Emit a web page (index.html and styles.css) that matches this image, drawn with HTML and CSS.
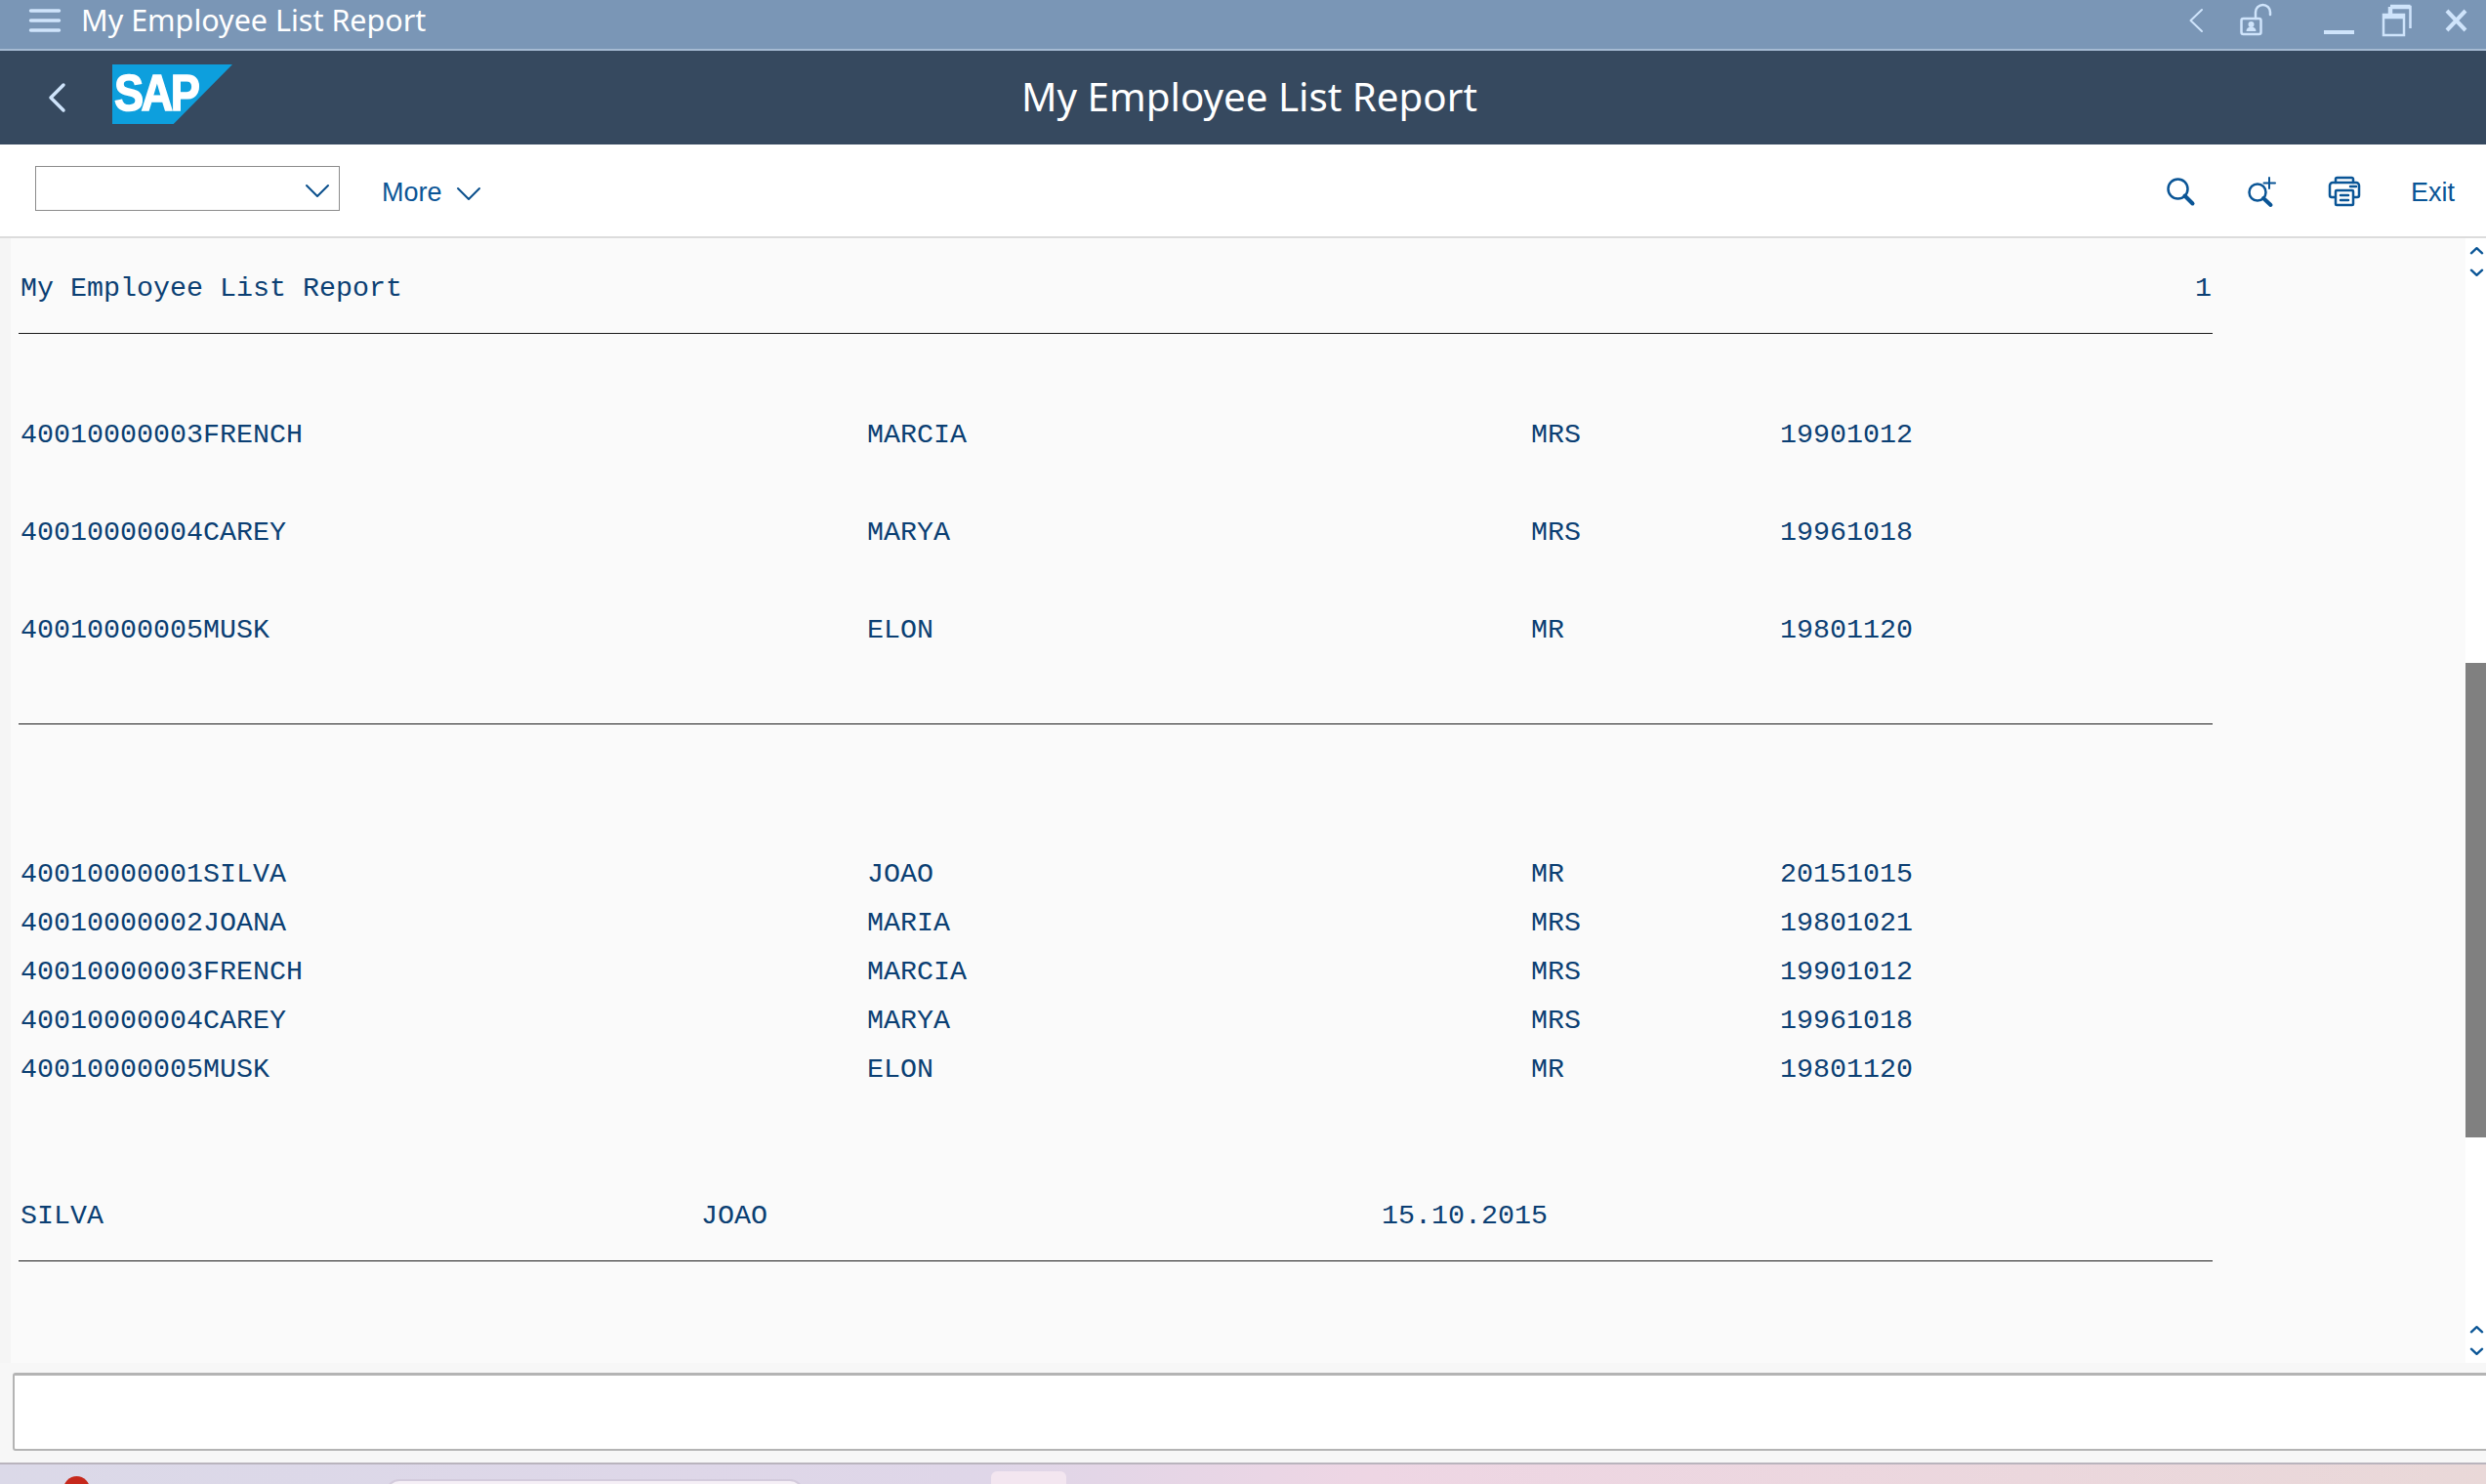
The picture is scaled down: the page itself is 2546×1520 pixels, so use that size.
FILE: index.html
```html
<!DOCTYPE html>
<html lang="en">
<head>
<meta charset="utf-8">
<title>My Employee List Report</title>
<link rel="stylesheet" href="styles.css">
</head>
<body>
<div class="app">
  <header class="titlebar">
    <svg class="ic-menu" viewBox="0 0 32 24"><path d="M1.500 2H30.500M1.500 12H30.500M1.500 22H30.500"/></svg>
    <span class="titlebar-text">My Employee List Report</span>
    <div class="window-controls">
      <svg class="ic-prev" viewBox="0 0 14 24"><path d="M13 1 1.500 12 13 23"/></svg>
      <svg class="ic-lock" viewBox="0 0 32 32"><rect x="1.500" y="15" width="20" height="16" rx="2"/><path d="M16 15V8.500a7.500 7.500 0 0 1 15 0V11"/><circle class="solid" cx="11.500" cy="21" r="3"/><path class="solid" d="M6.500 28c0-3 2-4.500 5-4.500s5 1.500 5 4.500z"/></svg>
      <svg class="ic-min" viewBox="0 0 31 4"><path d="M0 2H31"/></svg>
      <svg class="ic-restore" viewBox="0 0 30 32"><path d="M8 2H28.500V24"/><path d="M8 2V9M28.500 2H8" class="thick"/><rect x="1" y="10" width="21" height="21"/><path d="M1 12H22" class="thick"/></svg>
      <svg class="ic-close" viewBox="0 0 23 22"><path d="M2 1 21 21M21 1 2 21"/></svg>
    </div>
  </header>
  <div class="appbar">
    <svg class="ic-back" viewBox="0 0 18 30"><path d="M16 2 3 15 16 28"/></svg>
    <div class="logo"><span class="logo-text">SAP</span></div>
    <h1 class="appbar-title">My Employee List Report</h1>
  </div>
  <div class="toolbar">
    <div class="select"><svg class="ic-chev" viewBox="0 0 24 13"><path d="M1 1 12 12 23 1"/></svg></div>
    <div class="more">More<svg class="ic-chev" viewBox="0 0 24 13"><path d="M1 1 12 12 23 1"/></svg></div>
    <div class="actions">
      <svg class="ic-search" viewBox="0 0 28 28"><circle cx="11.500" cy="11.500" r="10"/><path class="heavy" d="M18.500 18.500 26.500 26.500"/></svg>
      <svg class="ic-zoom" viewBox="0 0 30 29"><circle cx="11" cy="15" r="8.500"/><path class="heavy" d="M17 21 24.500 28"/><path class="thin" d="M23 0V11M17.500 5.500H29"/></svg>
      <svg class="ic-print" viewBox="0 0 32 30"><path d="M7 6V2.500a1.500 1.500 0 0 1 1.500-1.500H23.500a1.500 1.500 0 0 1 1.500 1.500V6"/><path d="M6 21H3a2 2 0 0 1-2-2V9a3 3 0 0 1 3-3H28a3 3 0 0 1 3 3V19a2 2 0 0 1-2 2H26"/><rect x="7" y="14" width="18" height="15" rx="1"/><path d="M12 19H20M12 24H20M22 10H28"/></svg>
      <span class="exit">Exit</span>
    </div>
  </div>
  <main class="workarea">
    <div class="report">
      <div class="page">
<div class="row">My Employee List Report                                                                                                            1</div>
<div class="row rule"></div>
<div class="row"></div>
<div class="row">40010000003FRENCH                                  MARCIA                                  MRS            19901012</div>
<div class="row"></div>
<div class="row">40010000004CAREY                                   MARYA                                   MRS            19961018</div>
<div class="row"></div>
<div class="row">40010000005MUSK                                    ELON                                    MR             19801120</div>
<div class="row"></div>
<div class="row rule"></div>
<div class="row"></div>
<div class="row"></div>
<div class="row">40010000001SILVA                                   JOAO                                    MR             20151015</div>
<div class="row">40010000002JOANA                                   MARIA                                   MRS            19801021</div>
<div class="row">40010000003FRENCH                                  MARCIA                                  MRS            19901012</div>
<div class="row">40010000004CAREY                                   MARYA                                   MRS            19961018</div>
<div class="row">40010000005MUSK                                    ELON                                    MR             19801120</div>
<div class="row"></div>
<div class="row"></div>
<div class="row">SILVA                                    JOAO                                     15.10.2015</div>
<div class="row rule"></div>
      </div>
    </div>
    <aside class="scrollrail">
      <div class="pager"><svg viewBox="0 0 14 7"><path d="M1 6.500 7 1l6 5.500"/></svg><svg viewBox="0 0 14 7"><path d="M1 .5 7 6l6-5.500"/></svg></div>
      <div class="thumb"></div>
      <div class="pager pager-end"><svg viewBox="0 0 14 7"><path d="M1 6.500 7 1l6 5.500"/></svg><svg viewBox="0 0 14 7"><path d="M1 .5 7 6l6-5.500"/></svg></div>
    </aside>
  </main>
  <div class="okcode"><div class="okcode-field"></div></div>
  <footer class="taskbar">
    <span class="dot"></span>
    <span class="pill"></span>
    <span class="tile"></span>
  </footer>
</div>
</body>
</html>
```
FILE: styles.css
```css
* { box-sizing: border-box; }
html, body { margin: 0; height: 100%; overflow: hidden; }
body { font-family: "Noto Sans", sans-serif; background: #f7f7f7; }
svg { display: block; fill: none; stroke-linecap: round; stroke-linejoin: round; overflow: visible; }

.app { width: 2546px; height: 1520px; display: flex; flex-direction: column; overflow: hidden; }

.titlebar { height: 52px; flex: none; display: flex; align-items: center; background: #7a96b6; border-bottom: 2px solid #a5bad2; padding: 0 0 8px 30px; color: #fff; }
.titlebar svg { stroke: #cfe4fb; }
.ic-menu { width: 32px; height: 24px; stroke-width: 3.500; }
.titlebar-text { font-size: 30.500px; margin: -3px 0 0 21px; line-height: 40px; }
.window-controls { margin: 0 0 -8px auto; display: flex; align-items: flex-start; height: 50px; }
.ic-prev { width: 14px; height: 24px; margin: 9px 0 0 0; stroke-width: 2; }
.ic-lock { width: 32px; height: 32px; margin: 4px 0 0 38px; stroke-width: 2.500; }
.ic-lock .solid { fill: #cfe4fb; stroke: none; }
.ic-min { width: 31px; height: 4px; margin: 31px 0 0 54px; stroke-width: 4; stroke-linecap: butt; }
.ic-restore { width: 30px; height: 32px; margin: 5px 0 0 29px; stroke-width: 2.500; stroke-linecap: butt; stroke-linejoin: miter; }
.ic-restore .thick { stroke-width: 4.500; }
.ic-close { width: 23px; height: 22px; margin: 10px 19px 0 34px; stroke-width: 4; stroke-linecap: butt; }

.appbar { height: 96px; flex: none; display: flex; align-items: center; background: #36495f; padding-left: 49px; position: relative; }
.ic-back { width: 18px; height: 30px; stroke: #cfe4fb; stroke-width: 3.500; }
.logo { width: 123px; height: 61px; margin: -7px 0 0 48px; background: #0d9fdd; clip-path: polygon(0 0, 100% 0, 51% 100%, 0 100%); display: flex; align-items: center; }
.logo-text { font-family: "Liberation Sans", sans-serif; font-weight: 700; font-size: 52px; line-height: 1; letter-spacing: -3px; color: #fff; -webkit-text-stroke: 1.500px #fff; margin: -3px 0 0 2px; transform: scaleX(0.87); transform-origin: left center; }
.appbar-title { position: absolute; left: 13px; right: 0; top: 1px; margin: 0; text-align: center; font-weight: 400; font-size: 40.300px; line-height: 92px; color: #fff; }

.toolbar { height: 96px; flex: none; display: flex; align-items: center; background: #fff; border-bottom: 2px solid #dcdcdc; padding: 2px 32px 0 36px; color: #0a5596; font-family: "Liberation Sans", sans-serif; font-size: 27px; }
.toolbar .ic-chev { width: 24px; height: 13px; stroke: #0a4f8c; stroke-width: 2; }
.select { width: 312px; height: 46px; margin-top: -6px; border: 1px solid #8c8c8c; display: flex; align-items: center; justify-content: flex-end; padding: 5px 10px 0 0; }
.more { margin: 2px 0 0 43px; display: flex; align-items: center; gap: 15px; }
.more .ic-chev { margin-top: 3px; }
.actions { margin-left: auto; display: flex; align-items: center; }
.actions svg { stroke: #0a5596; stroke-width: 2.500; }
.actions .heavy { stroke-width: 4; }
.actions .thin { stroke-width: 2; }
.ic-search { width: 28px; height: 28px; }
.ic-zoom { width: 30px; height: 29px; margin-left: 54px; }
.ic-print { width: 32px; height: 30px; margin-left: 54px; }
.exit { margin: 2px 0 0 52px; }

.workarea { height: 1152px; flex: none; display: flex; background: #f5f5f5; padding-left: 11px; }
.report { flex: 1; background: #fafafa; padding: 25px 0 0 10px; overflow: hidden; }
.page { width: 2245px; color: #0b3f73; font-family: "Liberation Mono", monospace; font-size: 28.330px; }
.row { height: 50px; padding-top: 2px; line-height: 50px; white-space: pre; }
.rule { position: relative; }
.rule::after { content: ""; position: absolute; left: -2px; right: 0; top: 22px; border-top: 1px solid #1a1a1a; }

.scrollrail { width: 21px; flex: none; background: #fff; display: flex; flex-direction: column; }
.pager { display: flex; flex-direction: column; gap: 16px; padding: 9px 0 0 5px; }
.pager svg { width: 13px; height: 7px; stroke: #0a5596; stroke-width: 2.500; }
.thumb { width: 21px; height: 486px; margin-top: 396px; background: #808080; }
.pager-end { margin-top: auto; padding: 0 0 8px 5px; }

.okcode { height: 102px; flex: none; background: #f7f7f7; padding: 10px 0 0 13px; }
.okcode-field { height: 80px; margin-right: -4px; background: #fff; border: 2px solid #b4b4b4; border-top-width: 3px; border-radius: 3px 0 0 3px; }

.taskbar { flex: 1; position: relative; background: linear-gradient(90deg, #dbd9e8 0%, #dfd6e8 40%, #eed6e4 55%, #e9d8d8 100%); border-top: 2px solid #b9b4bd; overflow: hidden; }
.dot { position: absolute; left: 65px; top: 12px; width: 27px; height: 27px; border-radius: 50%; background: #c6281c; }
.pill { position: absolute; left: 395px; top: 15px; width: 428px; height: 40px; border-radius: 14px; background: #f5eff6; border: 2px solid #d3cbdc; }
.tile { position: absolute; left: 1015px; top: 7px; width: 77px; height: 40px; border-radius: 6px; background: #f3e6f0; }
```
